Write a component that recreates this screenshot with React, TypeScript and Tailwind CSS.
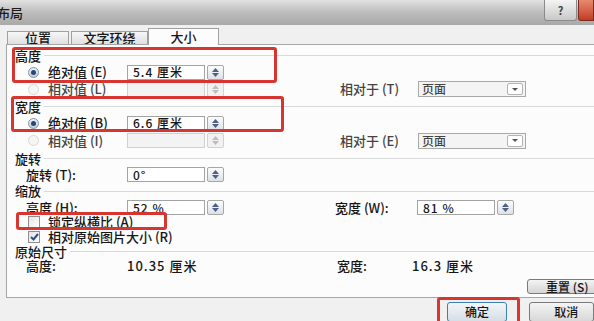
import React from 'react';

// spinner beside a number box
const Spin = ({ off }: { off?: boolean }) => (
  <div
    className={`ml-[2px] w-[17px] h-[15px] border rounded-[2px] flex flex-col items-center justify-center gap-[1px] ${
      off ? 'border-[#d2d2d2] bg-[#f2f2f2]' : 'border-[#a7a7a7] bg-gradient-to-b from-[#fbfbfb] to-[#dde2e8]'
    }`}
  >
    <svg width="7" height="4" viewBox="0 0 7 4">
      <path d="M0 4 L3.5 0 L7 4 Z" fill={off ? '#bdbdbd' : '#4d6185'} />
    </svg>
    <svg width="7" height="4" viewBox="0 0 7 4">
      <path d="M0 0 L3.5 4 L7 0 Z" fill={off ? '#bdbdbd' : '#4d6185'} />
    </svg>
  </div>
);

const Field = ({ value = '', off }: { value?: string; off?: boolean }) => (
  <div className="flex items-center">
    <div
      className={`w-[78px] h-[15px] border flex items-center pl-[5px] text-[12px] tracking-[1px] ${
        off ? 'border-[#d0d0d0] bg-[#f3f3f3]' : 'border-[#a3a3a3] bg-white'
      }`}
    >
      {value}
    </div>
    <Spin off={off} />
  </div>
);

const Radio = ({ on }: { on?: boolean }) => (
  <div
    className={`w-[11px] h-[11px] rounded-full border flex items-center justify-center ${
      on ? 'border-[#8290a3] bg-gradient-to-b from-[#eef2f7] to-[#c3cedb]' : 'border-[#d8d8d8] bg-[#f5f5f5]'
    }`}
  >
    {on && <div className="w-[5px] h-[5px] rounded-full bg-[#24487c]" />}
  </div>
);

const Check = ({ on }: { on?: boolean }) => (
  <div className="w-[12px] h-[12px] border border-[#8f8f8f] bg-gradient-to-br from-[#e4e4e4] to-white flex items-center justify-center">
    {on && (
      <svg width="9" height="8" viewBox="0 0 9 8">
        <path d="M1 4 L3.5 6.5 L8 1" stroke="#2d4f8e" strokeWidth="2" fill="none" />
      </svg>
    )}
  </div>
);

const Select = () => (
  <div className="w-[108px] h-[16px] border border-[#a8a8a8] bg-[#f4f4f4] flex items-center text-[12px]">
    <span className="pl-[3px] flex-1">页面</span>
    <div className="w-[16px] h-[12px] mr-[2px] border border-[#b3b3b3] rounded-[2px] bg-white flex items-center justify-center">
      <svg width="6" height="3" viewBox="0 0 6 3">
        <path d="M0 0 L3 3 L6 0 Z" fill="#555" />
      </svg>
    </div>
  </div>
);

const Heading = ({ text, h }: { text: string; h: string }) => (
  <div className={`flex items-center pl-[8px] ${h}`}>
    <span>{text}</span>
    <div className="flex-1 ml-[3px] border-t border-[#d9d9d9]" />
  </div>
);

const RedBox = ({ pos }: { pos: string }) => (
  <div className={`absolute border-[3px] border-[#d7352f] rounded-[3px] pointer-events-none ${pos}`} />
);

export default function App() {
  return (
    <div className="w-[594px] h-[321px] overflow-hidden bg-[#f0f0f0] font-['Noto_Sans_CJK_SC',sans-serif] font-medium text-[13px] leading-[14px] text-[#161616]">
      {/* title bar */}
      <div className="h-[25px] flex items-center bg-gradient-to-b from-[#e2e2e2] via-[#bcbcbc] to-[#a9a9a9]">
        <span className="-ml-[3px] text-[13px] text-[#1a1a1a]">布局</span>
        <div className="flex-1" />
        <div className="self-start w-[33px] h-[21px] border border-t-0 border-[#8a8a8a] rounded-b-[3px] bg-gradient-to-b from-[#f4f4f4] to-[#c8c8c8] flex items-center justify-center text-[11px] font-bold text-[#404040]">
          ?
        </div>
        <div className="self-start ml-[1px] w-[16px] h-[21px] border border-t-0 border-[#7a2a20] rounded-bl-[3px] bg-gradient-to-b from-[#e68a6e] to-[#c23a22]" />
      </div>

      {/* tabs */}
      <div className="pt-[3px] pl-[7px] h-[19px] flex items-end">
        <div className="w-[62px] h-[13px] border border-b-0 border-[#a0a0a0] bg-gradient-to-b from-[#f6f6f6] to-[#e0e0e0] flex items-center justify-center">
          位置
        </div>
        <div className="ml-[2px] w-[77px] h-[13px] border border-b-0 border-[#a0a0a0] bg-gradient-to-b from-[#f6f6f6] to-[#e0e0e0] flex items-center justify-center">
          文字环绕
        </div>
        <div className="relative z-10 w-[71px] h-[17px] -mb-[1px] border border-b-0 border-[#a0a0a0] bg-[#fcfcfc] flex items-center justify-center pb-[1px]">
          大小
        </div>
      </div>

      {/* panel */}
      <div className="relative ml-[6px] w-[600px] h-[254px] border border-[#a6a6a6] bg-[#fcfcfc] pt-[2px]">
        <Heading text="高度" h="h-[17px]" />
        <div className="flex items-center h-[16px]">
          <div className="w-[120px] flex items-center pl-[21px]">
            <Radio on />
            <span className="ml-[9px]">绝对值 (E)</span>
          </div>
          <Field value="5.4 厘米" />
        </div>
        <div className="flex items-center h-[18px] text-[#444]">
          <div className="w-[120px] flex items-center pl-[21px]">
            <Radio />
            <span className="ml-[9px]">相对值 (L)</span>
          </div>
          <div className="w-[213px]">
            <Field off />
          </div>
          <div className="w-[78px]">相对于 (T)</div>
          <Select />
        </div>

        <Heading text="宽度" h="h-[17px]" />
        <div className="flex items-center h-[16px]">
          <div className="w-[120px] flex items-center pl-[21px]">
            <Radio on />
            <span className="ml-[9px]">绝对值 (B)</span>
          </div>
          <Field value="6.6 厘米" />
        </div>
        <div className="flex items-center h-[19px] text-[#444]">
          <div className="w-[120px] flex items-center pl-[21px]">
            <Radio />
            <span className="ml-[9px]">相对值 (I)</span>
          </div>
          <div className="w-[213px]">
            <Field off />
          </div>
          <div className="w-[78px]">相对于 (E)</div>
          <Select />
        </div>

        <Heading text="旋转" h="h-[17px]" />
        <div className="flex items-center h-[15px]">
          <div className="w-[120px] pl-[19px]">旋转 (T):</div>
          <Field value="0°" />
        </div>

        <Heading text="缩放" h="h-[18px]" />
        <div className="flex items-center h-[15px]">
          <div className="w-[120px] pl-[19px]">高度 (H):</div>
          <div className="w-[208px]">
            <Field value="52 %" />
          </div>
          <div className="w-[82px]">宽度 (W):</div>
          <Field value="81 %" />
        </div>
        <div className="flex items-center h-[14px] pl-[21px]">
          <Check />
          <span className="ml-[8px]">锁定纵横比 (A)</span>
        </div>
        <div className="flex items-center h-[15px] pl-[21px]">
          <Check on />
          <span className="ml-[8px]">相对原始图片大小 (R)</span>
        </div>

        <Heading text="原始尺寸" h="h-[15px]" />
        <div className="flex items-center h-[14px]">
          <div className="w-[120px] pl-[19px]">高度:</div>
          <div className="w-[210px] tracking-[1px]">10.35 厘米</div>
          <div className="w-[75px]">宽度:</div>
          <div className="tracking-[1px]">16.3 厘米</div>
        </div>
        <div className="flex h-[21px] items-end pl-[520px]">
          <div className="w-[72px] h-[15px] border border-[#7a7a7a] rounded-[3px] bg-gradient-to-b from-[#f4f4f4] to-[#d4d4d4] flex items-center pl-[18px] text-[12px]">
            重置 (S)
          </div>
        </div>

        <RedBox pos="left-[5px] top-[2px] w-[265px] h-[36px]" />
        <RedBox pos="left-[4px] top-[51px] w-[273px] h-[36px]" />
        <RedBox pos="left-[9px] top-[167px] w-[151px] h-[18px]" />
      </div>

      {/* bottom buttons */}
      <div className="relative flex items-start pt-[4px] pl-[447px] gap-[22px]">
        <div className="w-[68px] h-[20px] border border-[#3c7fb1] rounded-[3px] bg-gradient-to-b from-[#f2f6fa] to-[#d6dde5] flex items-center justify-center text-[12px]">
          确定
        </div>
        <div className="w-[70px] h-[20px] border border-[#7a7a7a] rounded-[3px] bg-gradient-to-b from-[#f4f4f4] to-[#d8d8d8] flex items-center pl-[24px] text-[12px]">
          取消
        </div>
        <RedBox pos="left-[437px] top-[-1px] w-[83px] h-[28px]" />
      </div>
    </div>
  );
}
